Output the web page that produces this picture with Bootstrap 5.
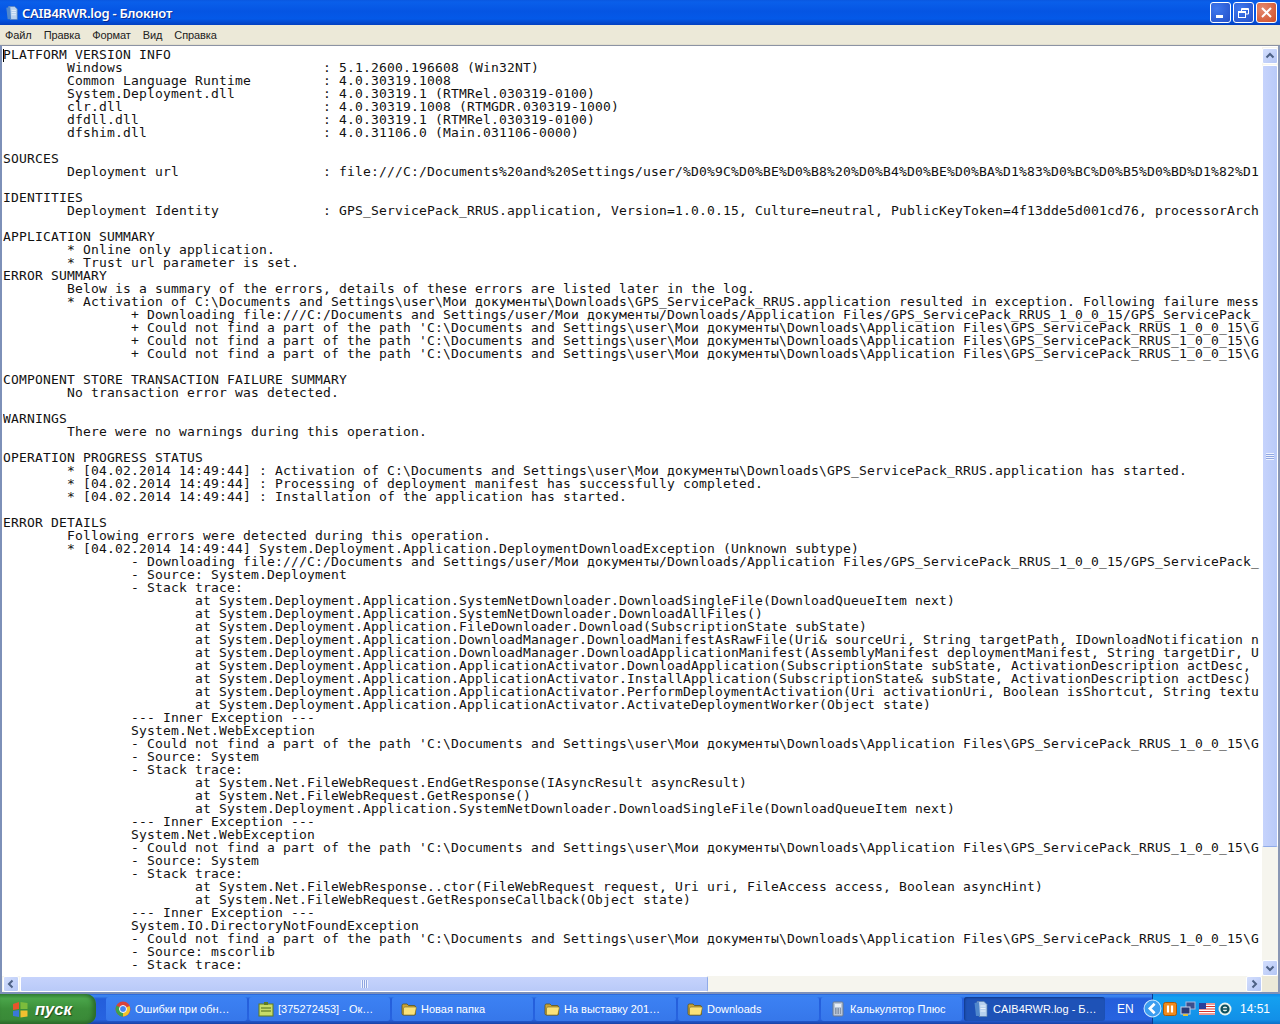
<!DOCTYPE html>
<html lang="ru">
<head>
<meta charset="utf-8">
<title>CAIB4RWR.log - Блокнот</title>
<link href="https://cdn.jsdelivr.net/npm/bootstrap@5.3.0/dist/css/bootstrap.min.css" rel="stylesheet">
<style>
html,body{margin:0;height:1024px;width:1280px;overflow:hidden;background:#ece9d8}
.xp-window{height:994px;background:#ece9d8}
.xp-title{height:25px;background:linear-gradient(180deg,#0a58e0 0,#0a5fea 8%,#0555e3 45%,#0459e8 75%,#0340c0 100%);color:#fff;font:600 13px "Noto Sans",sans-serif;padding-left:5px;text-shadow:1px 1px 0 #0a2a90}
.xp-title-name{margin-left:3px;letter-spacing:-.25px}
.win-btn{width:21px;height:21px;border:1px solid #fff;border-radius:3px;margin-right:2px;background:radial-gradient(circle at 30% 30%,#3f78ee,#2450c8)}
.win-btn.is-close{background:radial-gradient(circle at 30% 30%,#e58a70,#cf4d26);margin-right:3px}
.xp-menu{height:20px;font:11px "Liberation Sans",sans-serif;color:#222;padding-left:5px;gap:12px;letter-spacing:-.1px;border-bottom:1px solid #e2dfcf}
.xp-body{height:949px;border-top:1px solid #8c93a3;border-left:2px solid #7d90b8;border-right:2px solid #8a97b4;border-bottom:2px solid #7d90b8;position:relative}
.xp-main{width:1260px;height:946px}
.xp-text{height:930px;background:#fff;overflow:hidden;padding:2px 0 0 1px}
.log-text{margin:0;font:13px/13px "DejaVu Sans Mono",monospace;letter-spacing:.174px;color:#111;white-space:pre;overflow:hidden;height:928px}
.log-caret{position:absolute;left:1px;top:3px;width:1px;height:13px;background:#000}
.vbar{width:16px;background:#f6f5ee;height:930px;padding-top:1px;border-top:1px solid #fff}
.hbar{height:16px;background:#f6f5ee;padding-left:1px}
.sb-btn{width:16px;height:16px;border:1px solid #fff;border-radius:2px;background:linear-gradient(135deg,#d3defd,#b4c6f5);flex:none}
.sb-thumb-v{height:782px;background:linear-gradient(90deg,#c6d3fc,#b9caf8);border:1px solid #fff;border-bottom-color:#8faae8;border-radius:2px;margin-top:1px}
.sb-thumb-h{width:688px;background:linear-gradient(180deg,#c6d3fc,#b9caf8);border:1px solid #fff;border-right-color:#8faae8;border-radius:2px;margin-left:1px}
.sb-grip{width:8px;height:7px;background:repeating-linear-gradient(180deg,#eef2fe 0 1px,#8fa6e0 1px 2px)}
.sb-grip-h{width:7px;height:8px;background:repeating-linear-gradient(90deg,#eef2fe 0 1px,#8fa6e0 1px 2px)}
.sb-corner{width:16px;height:16px;background:#ece9d8}
.xp-task{height:30px;background:linear-gradient(180deg,#245edb 0,#3f8cf3 6%,#245edb 16%,#2763e0 85%,#1941a5 100%);color:#fff;font:11px "Liberation Sans",sans-serif}
.xp-start{width:96px;height:30px;background:linear-gradient(180deg,#388e3c 0,#4aa54a 15%,#3c8f3a 50%,#3a8a38 85%,#2c6b2b 100%);border-radius:0 10px 10px 0;font:italic 700 16.500px "Liberation Sans",sans-serif;text-shadow:1px 1px 1px #1e4a1e;padding-left:11px;gap:5px;box-shadow:inset -3px 0 4px #2b6a2a}
.task-list{gap:2px;margin-left:10px}
.task-btn{width:141px;height:24px;padding-left:9px;gap:4px;background:linear-gradient(180deg,#3c81f3,#3677ea);border-radius:3px;white-space:nowrap;overflow:hidden}
.task-btn.is-active{background:#1e52b7;box-shadow:inset 1px 1px 2px #123a8a}
.xp-lang{width:46px;padding-left:11px;font-size:12px}
.xp-tray{width:128px;height:30px;background:linear-gradient(180deg,#0f8cec 0,#14a0f0 12%,#1290e8 85%,#0b6fc8 100%);border-left:1px solid #0a3a90;gap:3px;padding-left:10px;position:relative;font-size:12px}
.tray-arrow{position:absolute;left:-10px;top:5px}
.tray-time{margin-left:5px}
</style>
</head>
<body>
<svg width="0" height="0" class="d-none" aria-hidden="true">
<symbol id="ic-folder" viewBox="0 0 16 16"><path d="M1 4.500Q1 3 2.500 3h3.500l1.500 1.500H13q1.500 0 1.500 1.500v7q0 1-1 1H2.500q-1.500 0-1.500-1.500z" fill="#c9a43a" stroke="#5f5418" stroke-width=".8"/><path d="M2.500 7Q3 6 4 6h10.500q1 0 .8 1L14 13q-.2 1-1.200 1H2.500z" fill="#fbe27a" stroke="#7a6a20" stroke-width=".6"/></symbol>
<symbol id="ic-note" viewBox="0 0 16 16"><path d="M4 .5h7l3 3V15.500H6z" fill="#b7d0ee" stroke="#5a7fb0" stroke-width=".7"/><path d="M1.500 2l4.500-1 1 14H3z" fill="#4f87cc"/><path d="M7.500 5h5M7.500 7.500h5M7.500 10h5" stroke="#e8f1fb"/></symbol>
</svg>
<div class="xp-window d-flex flex-column">
  <div class="xp-title d-flex align-items-center flex-none">
    <svg width="14" height="16" viewBox="0 0 16 16"><use href="#ic-note"/></svg>
    <span class="xp-title-name flex-grow-1">CAIB4RWR.log - Блокнот</span>
    <div class="win-btn d-flex align-items-center justify-content-center"><svg width="13" height="13" viewBox="0 0 13 13"><rect x="2" y="9" width="7" height="3" fill="#fff"/></svg></div>
    <div class="win-btn d-flex align-items-center justify-content-center"><svg width="13" height="13" viewBox="0 0 13 13" fill="none" stroke="#fff"><rect x="1.500" y="5.500" width="7" height="6"/><path d="M4.500 5V2.500h7V8H9"/><path d="M1.500 6.500h7M4.500 3.500h7"/></svg></div>
    <div class="win-btn is-close d-flex align-items-center justify-content-center"><svg width="13" height="13" viewBox="0 0 13 13" stroke="#fff" stroke-width="2"><path d="M2 2l9 9M11 2l-9 9"/></svg></div>
  </div>
  <div class="xp-menu d-flex align-items-center">
    <span>Файл</span><span>Правка</span><span>Формат</span><span>Вид</span><span>Справка</span>
  </div>
  <div class="xp-body d-flex">
    <div class="xp-main d-flex flex-column">
      <div class="xp-text"><span class="log-caret"></span><pre class="log-text">PLATFORM VERSION INFO
        Windows                         : 5.1.2600.196608 (Win32NT)
        Common Language Runtime         : 4.0.30319.1008
        System.Deployment.dll           : 4.0.30319.1 (RTMRel.030319-0100)
        clr.dll                         : 4.0.30319.1008 (RTMGDR.030319-1000)
        dfdll.dll                       : 4.0.30319.1 (RTMRel.030319-0100)
        dfshim.dll                      : 4.0.31106.0 (Main.031106-0000)

SOURCES
        Deployment url                  : file:///C:/Documents%20and%20Settings/user/%D0%9C%D0%BE%D0%B8%20%D0%B4%D0%BE%D0%BA%D1%83%D0%BC%D0%B5%D0%BD%D1%82%D1

IDENTITIES
        Deployment Identity             : GPS_ServicePack_RRUS.application, Version=1.0.0.15, Culture=neutral, PublicKeyToken=4f13dde5d001cd76, processorArch

APPLICATION SUMMARY
        * Online only application.
        * Trust url parameter is set.
ERROR SUMMARY
        Below is a summary of the errors, details of these errors are listed later in the log.
        * Activation of C:\Documents and Settings\user\Мои документы\Downloads\GPS_ServicePack_RRUS.application resulted in exception. Following failure mess
                + Downloading file:///C:/Documents and Settings/user/Мои документы/Downloads/Application Files/GPS_ServicePack_RRUS_1_0_0_15/GPS_ServicePack_
                + Could not find a part of the path 'C:\Documents and Settings\user\Мои документы\Downloads\Application Files\GPS_ServicePack_RRUS_1_0_0_15\G
                + Could not find a part of the path 'C:\Documents and Settings\user\Мои документы\Downloads\Application Files\GPS_ServicePack_RRUS_1_0_0_15\G
                + Could not find a part of the path 'C:\Documents and Settings\user\Мои документы\Downloads\Application Files\GPS_ServicePack_RRUS_1_0_0_15\G

COMPONENT STORE TRANSACTION FAILURE SUMMARY
        No transaction error was detected.

WARNINGS
        There were no warnings during this operation.

OPERATION PROGRESS STATUS
        * [04.02.2014 14:49:44] : Activation of C:\Documents and Settings\user\Мои документы\Downloads\GPS_ServicePack_RRUS.application has started.
        * [04.02.2014 14:49:44] : Processing of deployment manifest has successfully completed.
        * [04.02.2014 14:49:44] : Installation of the application has started.

ERROR DETAILS
        Following errors were detected during this operation.
        * [04.02.2014 14:49:44] System.Deployment.Application.DeploymentDownloadException (Unknown subtype)
                - Downloading file:///C:/Documents and Settings/user/Мои документы/Downloads/Application Files/GPS_ServicePack_RRUS_1_0_0_15/GPS_ServicePack_
                - Source: System.Deployment
                - Stack trace:
                        at System.Deployment.Application.SystemNetDownloader.DownloadSingleFile(DownloadQueueItem next)
                        at System.Deployment.Application.SystemNetDownloader.DownloadAllFiles()
                        at System.Deployment.Application.FileDownloader.Download(SubscriptionState subState)
                        at System.Deployment.Application.DownloadManager.DownloadManifestAsRawFile(Uri&amp; sourceUri, String targetPath, IDownloadNotification n
                        at System.Deployment.Application.DownloadManager.DownloadApplicationManifest(AssemblyManifest deploymentManifest, String targetDir, U
                        at System.Deployment.Application.ApplicationActivator.DownloadApplication(SubscriptionState subState, ActivationDescription actDesc,
                        at System.Deployment.Application.ApplicationActivator.InstallApplication(SubscriptionState&amp; subState, ActivationDescription actDesc)
                        at System.Deployment.Application.ApplicationActivator.PerformDeploymentActivation(Uri activationUri, Boolean isShortcut, String textu
                        at System.Deployment.Application.ApplicationActivator.ActivateDeploymentWorker(Object state)
                --- Inner Exception ---
                System.Net.WebException
                - Could not find a part of the path 'C:\Documents and Settings\user\Мои документы\Downloads\Application Files\GPS_ServicePack_RRUS_1_0_0_15\G
                - Source: System
                - Stack trace:
                        at System.Net.FileWebRequest.EndGetResponse(IAsyncResult asyncResult)
                        at System.Net.FileWebRequest.GetResponse()
                        at System.Deployment.Application.SystemNetDownloader.DownloadSingleFile(DownloadQueueItem next)
                --- Inner Exception ---
                System.Net.WebException
                - Could not find a part of the path 'C:\Documents and Settings\user\Мои документы\Downloads\Application Files\GPS_ServicePack_RRUS_1_0_0_15\G
                - Source: System
                - Stack trace:
                        at System.Net.FileWebResponse..ctor(FileWebRequest request, Uri uri, FileAccess access, Boolean asyncHint)
                        at System.Net.FileWebRequest.GetResponseCallback(Object state)
                --- Inner Exception ---
                System.IO.DirectoryNotFoundException
                - Could not find a part of the path 'C:\Documents and Settings\user\Мои документы\Downloads\Application Files\GPS_ServicePack_RRUS_1_0_0_15\G
                - Source: mscorlib
                - Stack trace:</pre></div>
      <div class="hbar d-flex">
        <div class="sb-btn d-flex align-items-center justify-content-center"><svg width="10" height="10" viewBox="0 0 10 10" fill="none" stroke="#4d6185" stroke-width="2"><path d="M6.500 1.500L3 5l3.500 3.500"/></svg></div>
        <div class="sb-thumb-h d-flex align-items-center justify-content-center"><span class="sb-grip-h"></span></div>
        <div class="flex-grow-1"></div>
        <div class="sb-btn d-flex align-items-center justify-content-center"><svg width="10" height="10" viewBox="0 0 10 10" fill="none" stroke="#4d6185" stroke-width="2"><path d="M3.500 1.500L7 5 3.500 8.500"/></svg></div>
      </div>
    </div>
    <div class="d-flex flex-column">
      <div class="vbar d-flex flex-column">
        <div class="sb-btn d-flex align-items-center justify-content-center"><svg width="10" height="10" viewBox="0 0 10 10" fill="none" stroke="#4d6185" stroke-width="2"><path d="M1.500 6.500L5 3l3.500 3.500"/></svg></div>
        <div class="sb-thumb-v d-flex align-items-center justify-content-center"><span class="sb-grip"></span></div>
        <div class="flex-grow-1"></div>
        <div class="sb-btn d-flex align-items-center justify-content-center"><svg width="10" height="10" viewBox="0 0 10 10" fill="none" stroke="#4d6185" stroke-width="2"><path d="M1.500 3.500L5 7l3.500-3.500"/></svg></div>
      </div>
      <div class="sb-corner"></div>
    </div>
  </div>
</div>
<div class="xp-task d-flex align-items-center">
  <div class="xp-start d-flex align-items-center">
    <svg width="19" height="19" viewBox="0 0 19 19"><path d="M2 4l6-2v7l-6 1z" fill="#e8552c"/><path d="M9.500 2l7 1v6l-7 0z" fill="#7cbc3c"/><path d="M2 11l6-1v7l-6-1z" fill="#3b78d8"/><path d="M9.500 10.500l7 0v6l-7 1z" fill="#f0c030"/></svg>
    <span>пуск</span>
  </div>
  <div class="task-list d-flex flex-grow-1">
    <div class="task-btn d-flex align-items-center"><svg width="16" height="16" viewBox="0 0 16 16"><circle cx="8" cy="8" r="7.500" fill="#d8433a"/><path d="M8 8L14.500 5A7.500 7.500 0 0 1 8 15.500z" fill="#f2c32c"/><path d="M8 8L8 15.500A7.500 7.500 0 0 1 1.500 4.500z" fill="#3ba24e"/><circle cx="8" cy="8" r="3.500" fill="#4285f4" stroke="#fff"/></svg><span>Ошибки при обн…</span></div>
    <div class="task-btn d-flex align-items-center"><svg width="16" height="16" viewBox="0 0 16 16"><rect x="1" y="3" width="14" height="12" fill="#c8dc6a" stroke="#5f7a20"/><rect x="6" y="1" width="4" height="3" fill="#5f7a20"/><path d="M3 7h10M3 10h10" stroke="#4a6a18"/></svg><span>[375272453] - Ок…</span></div>
    <div class="task-btn d-flex align-items-center"><svg width="16" height="16"><use href="#ic-folder"/></svg><span>Новая папка</span></div>
    <div class="task-btn d-flex align-items-center"><svg width="16" height="16"><use href="#ic-folder"/></svg><span>На выставку 201…</span></div>
    <div class="task-btn d-flex align-items-center"><svg width="16" height="16"><use href="#ic-folder"/></svg><span>Downloads</span></div>
    <div class="task-btn d-flex align-items-center"><svg width="16" height="16" viewBox="0 0 16 16"><rect x="3" y="1" width="10" height="14" rx="1" fill="#b9c6d8" stroke="#6a7a90"/><rect x="5" y="3" width="6" height="3" fill="#e8eef6"/><path d="M5 8h6M5 10h6M5 12h6" stroke="#55657c" stroke-dasharray="1.500 1"/></svg><span>Калькулятор Плюс</span></div>
    <div class="task-btn is-active d-flex align-items-center"><svg width="16" height="16"><use href="#ic-note"/></svg><span>CAIB4RWR.log - Б…</span></div>
  </div>
  <div class="xp-lang">EN</div>
  <div class="xp-tray d-flex align-items-center">
    <svg width="19" height="19" viewBox="0 0 18 18" class="tray-arrow"><circle cx="9" cy="9" r="8" fill="#3a9df0" stroke="#cfe8ff"/><path d="M11 4.500L6.500 9l4.500 4.500" fill="none" stroke="#fff" stroke-width="2.500"/></svg>
    <svg width="14" height="14" viewBox="0 0 14 14"><rect x=".5" y=".5" width="13" height="13" rx="2" fill="#f08a1c" stroke="#a85a08"/><path d="M5 3.500v7M9 3.500v7" stroke="#fff" stroke-width="2.200"/></svg>
    <svg width="16" height="16" viewBox="0 0 16 16"><rect x="6" y="1" width="9" height="7" fill="#3b4d8c" stroke="#a8b8e0"/><rect x="1" y="6" width="9" height="7" fill="#2b3b78" stroke="#c8d2ec"/><rect x="3" y="13" width="5" height="2" fill="#e0c040"/></svg>
    <svg width="16" height="12" viewBox="0 0 16 12"><rect width="16" height="12" fill="#fff"/><path d="M0 1h16M0 3.500h16M0 6h16M0 8.500h16M0 11h16" stroke="#d8352c" stroke-width="1.200"/><rect width="7" height="6" fill="#2c3f9a"/></svg>
    <svg width="14" height="14" viewBox="0 0 14 14"><circle cx="7" cy="7" r="6.500" fill="#e6f2ee"/><circle cx="7" cy="7" r="3.500" fill="none" stroke="#0d4f5c" stroke-width="2.200"/><path d="M4 7h6" stroke="#0d4f5c" stroke-width="1.500"/></svg>
    <span class="tray-time">14:51</span>
  </div>
</div>
</body>
</html>
